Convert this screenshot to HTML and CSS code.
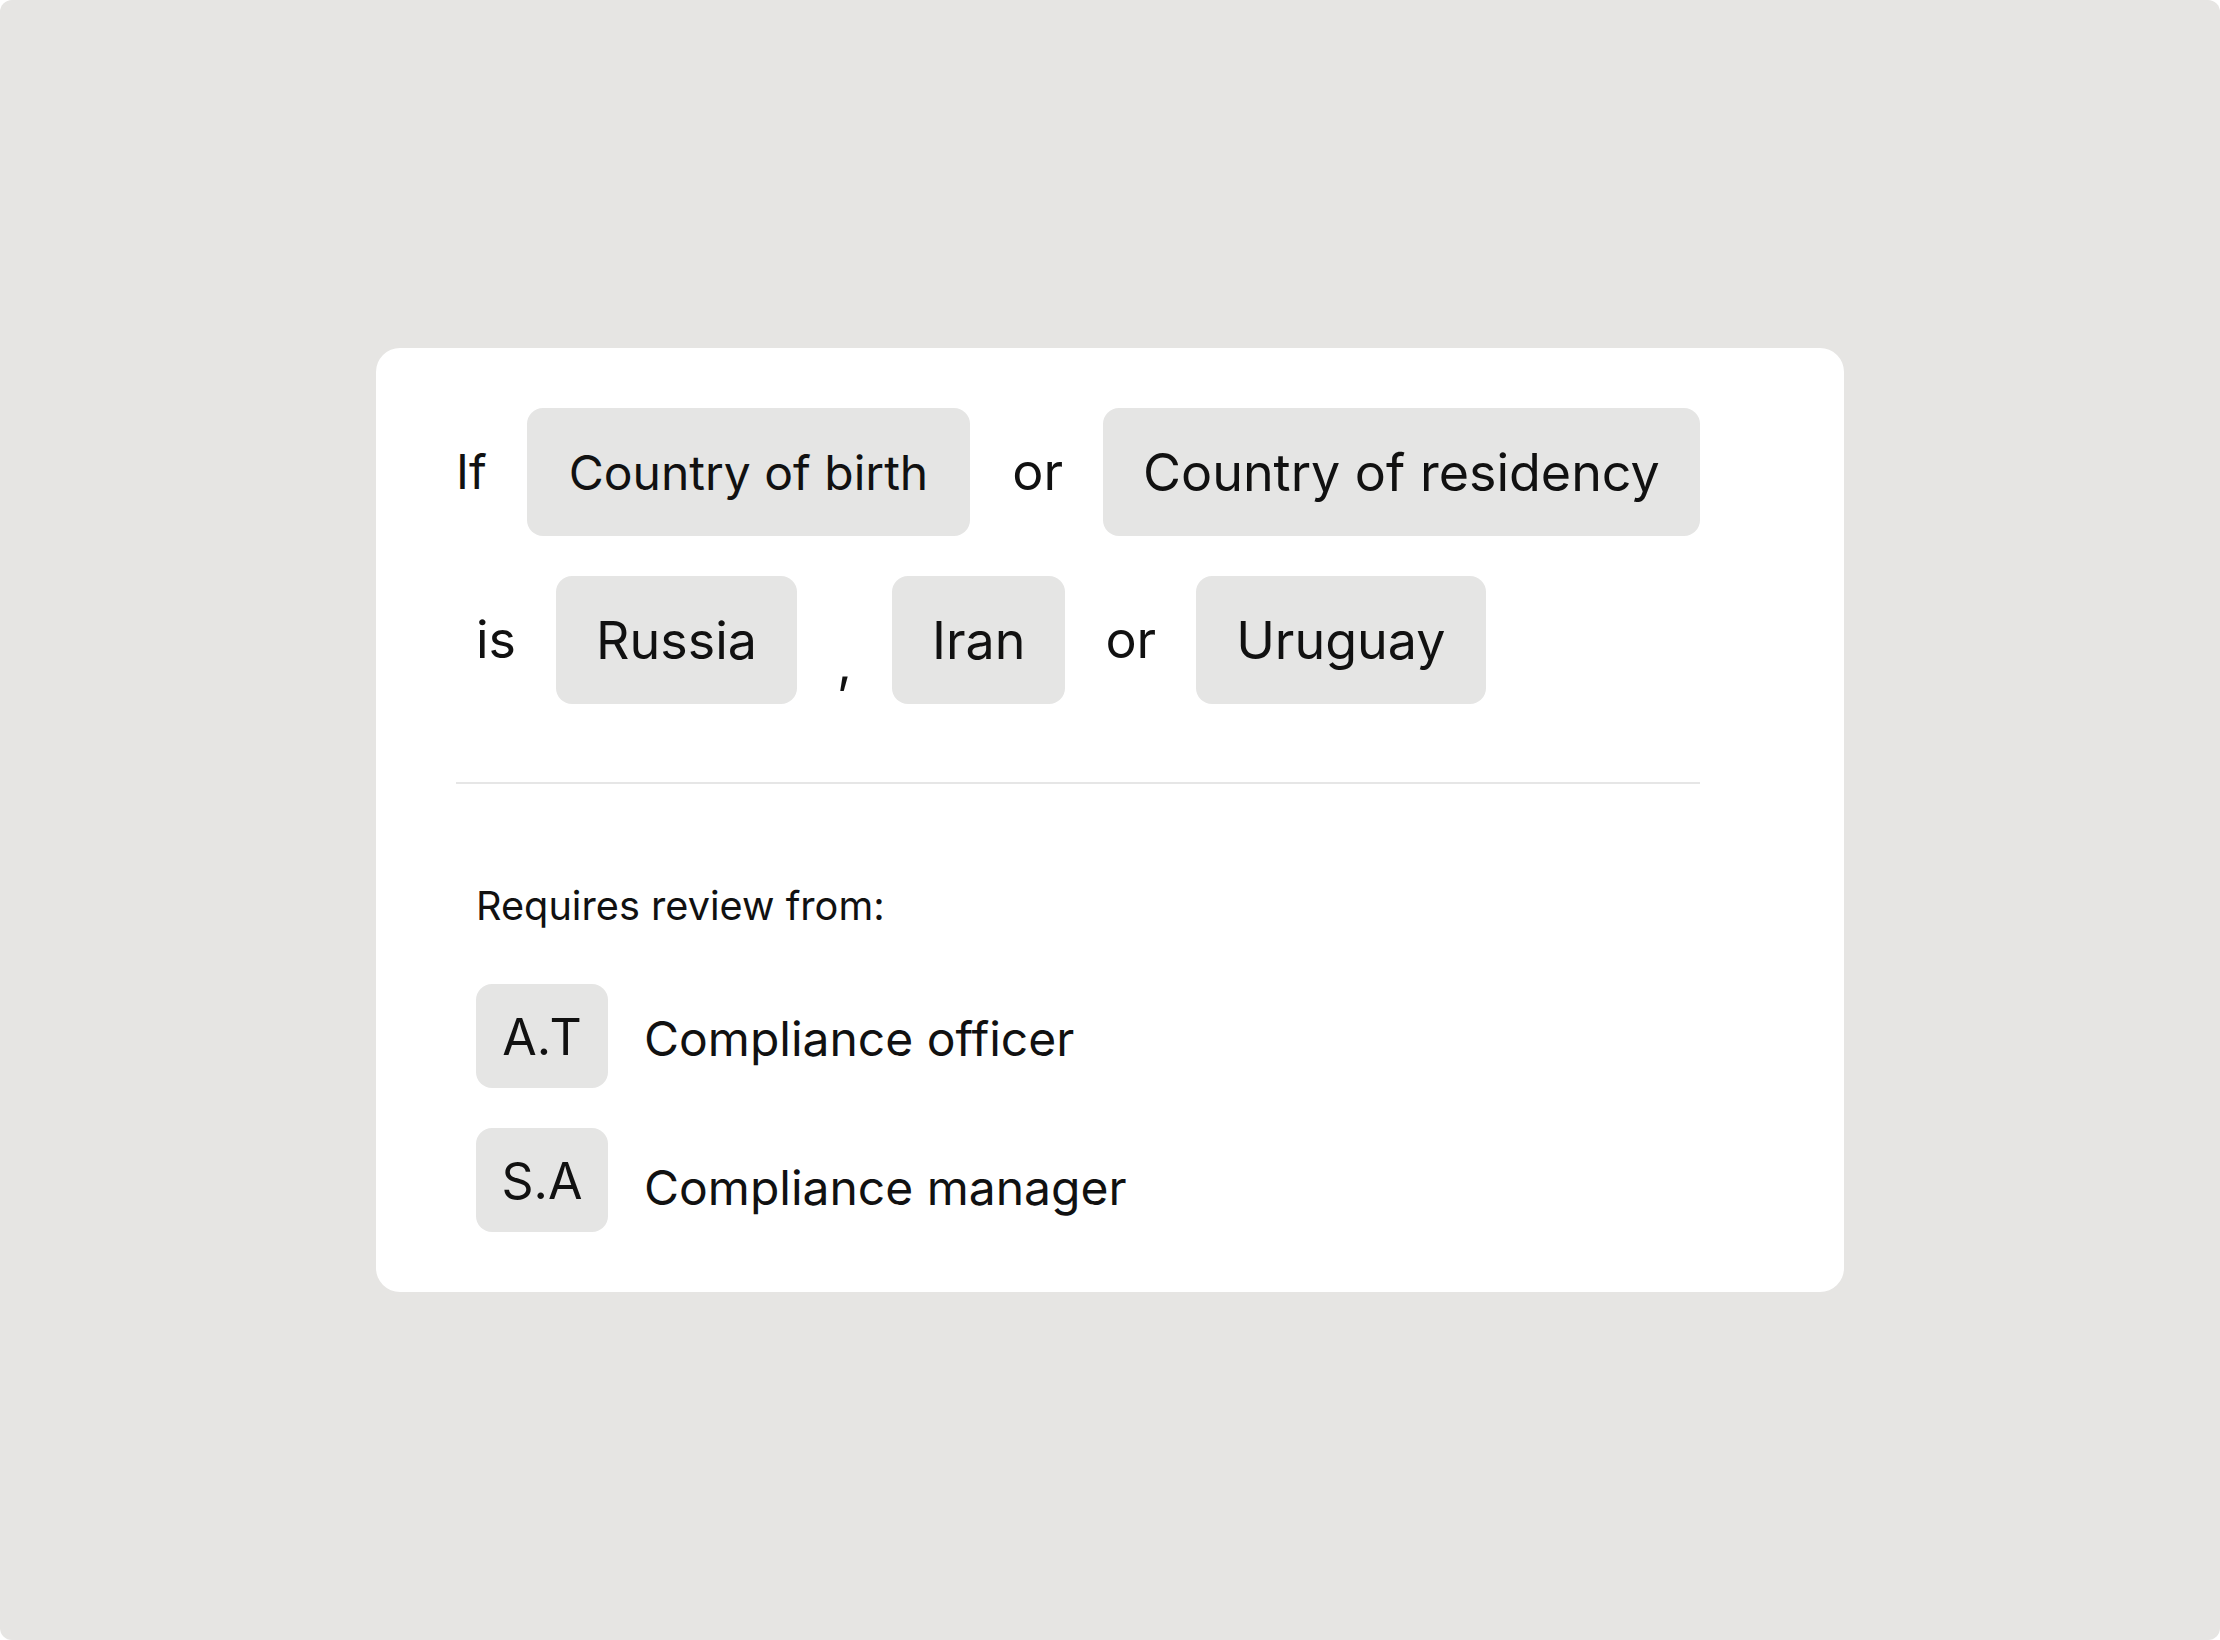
FILE: index.html
```html
<!DOCTYPE html>
<html lang="en">
<head>
<meta charset="utf-8">
<title>Review rule</title>
<link rel="stylesheet" href="styles.css">
</head>
<body>
<div class="frame">
  <section class="card">
    <div class="rule-row">
      <span class="word">If</span>
      <span class="chip chip-birth">Country of birth</span>
      <span class="word word-or">or</span>
      <span class="chip chip-residency">Country of residency</span>
    </div>
    <div class="rule-row rule-row-values">
      <span class="word">is</span>
      <span class="chip chip-value">Russia</span>
      <span class="word comma">,</span>
      <span class="chip chip-value">Iran</span>
      <span class="word">or</span>
      <span class="chip chip-value">Uruguay</span>
    </div>
    <hr class="divider">
    <div class="review">
      <p class="review-title">Requires review from:</p>
      <ul class="reviewers">
        <li class="reviewer">
          <span class="avatar">A.T</span>
          <span class="role role-high">Compliance officer</span>
        </li>
        <li class="reviewer">
          <span class="avatar">S.A</span>
          <span class="role role-low">Compliance manager</span>
        </li>
      </ul>
    </div>
  </section>
</div>
</body>
</html>
```
FILE: styles.css
```css
* {
  box-sizing: border-box;
}

html, body {
  margin: 0;
  padding: 0;
  background: #ffffff;
}

body {
  font-family: Inter, "Noto Sans", "Liberation Sans", sans-serif;
  color: #111111;
}

.frame {
  width: 2220px;
  height: 1640px;
  background: #e6e5e3;
  border-radius: 12px;
  display: flex;
  align-items: center;
  justify-content: center;
}

.card {
  width: 1468px;
  background: #ffffff;
  border-radius: 24px;
  padding: 60px 144px 60px 80px;
}

.rule-row {
  display: flex;
  align-items: center;
  gap: 40px;
}

.rule-row-values {
  margin-top: 40px;
  padding-left: 20px;
}

.word {
  font-size: 48px;
  line-height: 1.2;
}

.word-or {
  font-size: 52px;
  margin-left: 2px;
}

.rule-row-values .word {
  font-size: 52px;
}

.comma {
  align-self: flex-end;
  line-height: 1;
  margin-bottom: 14px;
}

.chip {
  display: flex;
  align-items: center;
  height: 128px;
  padding: 0 42px;
  background: #e5e5e4;
  border-radius: 16px;
  font-size: 48px;
  white-space: nowrap;
}

.chip-residency {
  font-size: 52px;
  padding: 0 40px;
}

.chip-value {
  font-size: 52px;
  padding: 0 40px;
}

.divider {
  margin: 78px 0 0;
  border: 0;
  height: 2px;
  background: #e6e6e6;
}

.review {
  padding-left: 20px;
  margin-top: 98px;
}

.review-title {
  margin: 0;
  font-size: 39.7px;
  line-height: 48px;
}

.reviewers {
  list-style: none;
  margin: 54px 0 0;
  padding: 0;
  display: flex;
  flex-direction: column;
  gap: 40px;
}

.reviewer {
  display: flex;
  align-items: center;
  gap: 36px;
}

.avatar {
  display: flex;
  align-items: center;
  justify-content: center;
  width: 132px;
  height: 104px;
  padding-top: 2px;
  background: #e5e5e4;
  border-radius: 16px;
  font-size: 50px;
}

.role {
  font-size: 48px;
  line-height: 1.2;
}

.role-high {
  padding-top: 6px;
}

.role-low {
  padding-top: 16px;
}
```
